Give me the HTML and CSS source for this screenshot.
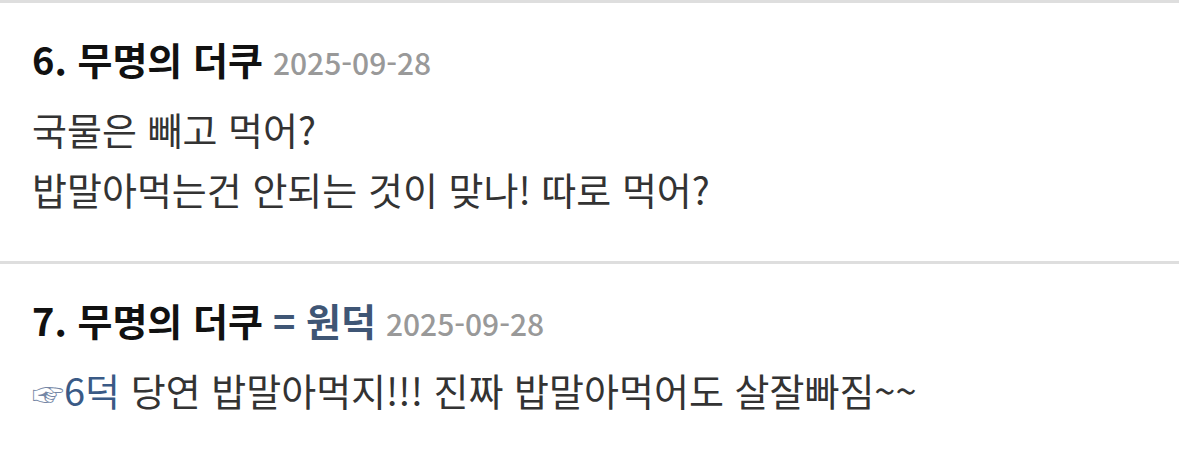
FILE: index.html
```html
<!DOCTYPE html>
<html lang="ko">
<head>
<meta charset="utf-8">
<link rel="stylesheet" href="styles.css">
</head>
<body>
<div class="comment">
  <div class="head"><span class="name">6. 무명의 더쿠</span><span class="date">2025-09-28</span></div>
  <div class="text">
    <p>국물은 빼고 먹어?</p>
    <p>밥말아먹는건 안되는 것이 맞나! 따로 먹어?</p>
  </div>
</div>
<div class="comment">
  <div class="head"><span class="name">7. 무명의 더쿠</span><span class="op">= 원덕</span><span class="date">2025-09-28</span></div>
  <div class="text">
    <p><span class="ref"><span class="hand">☞</span>6덕</span> 당연 밥말아먹지!!! 진짜 밥말아먹어도 살잘빠짐~~</p>
  </div>
</div>
</body>
</html>
```
FILE: styles.css
```css
html, body {
  margin: 0;
  padding: 0;
  background: #fff;
}
body {
  font-family: "Noto Sans CJK KR", "Noto Sans", sans-serif;
  color: #333;
}
.comment {
  border-top: 3px solid #dedede;
  padding: 26px 32px 42px;
  display: flex;
  flex-direction: column;
  gap: 10px;
}
.head {
  display: flex;
  align-items: baseline;
  gap: 10px;
  line-height: 60px;
  height: 60px;
  white-space: nowrap;
}
.name {
  font-size: 38px;
  font-weight: 700;
  color: #111;
}
.op {
  font-size: 38px;
  font-weight: 700;
  color: #3f5675;
}
.date {
  font-size: 30px;
  font-weight: 500;
  color: #999;
}
.text p {
  margin: 0;
  font-size: 38px;
  line-height: 60px;
  color: #333;
}
.ref {
  color: #3a5a86;
}
.hand {
  font-size: 32px;
  color: #7587a6;
}
```
